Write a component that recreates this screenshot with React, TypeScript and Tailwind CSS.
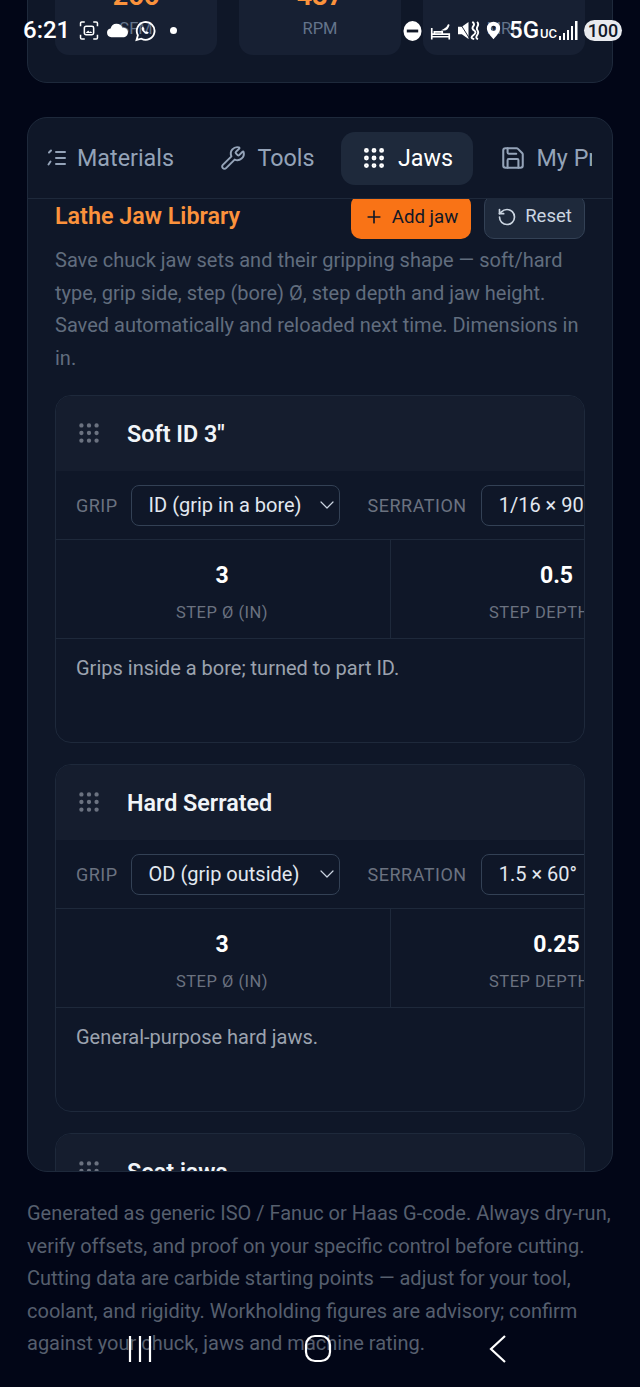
import React from 'react';
import { ChevronDown, Grip, Plus, RotateCcw, Save, Wrench } from 'lucide-react';

const jaws = [
  { name: 'Soft ID 3"', grip: 'ID (grip in a bore)', serration: '1/16 × 90°', dia: '3', depth: '0.5', note: 'Grips inside a bore; turned to part ID.' },
  { name: 'Hard Serrated', grip: 'OD (grip outside)', serration: '1.5 × 60°', dia: '3', depth: '0.25', note: 'General-purpose hard jaws.' },
];

function StatusBar() {
  return (
    <div className="absolute top-0 left-0 w-full h-[60px] text-white">
      <span className="absolute left-[23px] top-[17px] text-[24px] leading-[26px] font-medium">6:21</span>
      <svg className="absolute left-[78px] top-[20px]" width="22" height="21" viewBox="0 0 26 24" fill="none" stroke="white" strokeWidth="1.8">
        <path d="M3 7V3.500Q3 2 4.500 2H8M18 2h3.500Q23 2 23 3.500V7M3 17v3.500Q3 22 4.500 22H8M18 22h3.500q1.500 0 1.500-1.500V17" />
        <rect x="7.500" y="7" width="11" height="10" rx="2" />
        <path d="M9 15l3-3 2 2 1-1 2 2z" fill="white" stroke="none" />
      </svg>
      <svg className="absolute left-[106px] top-[23px]" width="23" height="15" viewBox="0 0 26 16" fill="white">
        <path d="M6 15.500a5 5 0 0 1-.8-9.900A7 7 0 0 1 18.500 5a5.300 5.300 0 0 1 2 10.500z" />
      </svg>
      <svg className="absolute left-[134px] top-[20px]" width="22" height="23" viewBox="0 0 26 26" fill="none" stroke="white" strokeWidth="2.200">
        <path d="M3 23l1.600-5.600A10.500 10.500 0 1 1 8.700 21.500z" />
        <path d="M9.500 8c-1 1.200-.6 3.400 1.600 5.700 2.300 2.300 4.500 2.800 5.600 1.700l.8-1.100-2.500-1.600-1 .8c-1-.5-2-1.500-2.500-2.500l.8-1-1.500-2.500z" fill="white" stroke="none" />
      </svg>
      <div className="absolute left-[170px] top-[27px] w-[7px] h-[7px] rounded-full bg-white" />
      <svg className="absolute left-[403px] top-[21px]" width="19" height="20" viewBox="0 0 20 21">
        <ellipse cx="10" cy="10.500" rx="9.500" ry="10.500" fill="white" />
        <rect x="4" y="9" width="12" height="3" fill="#111827" />
      </svg>
      <svg className="absolute left-[430px] top-[22px]" width="21" height="19" viewBox="0 0 24 20" fill="none" stroke="white" strokeWidth="1.900">
        <path d="M2 6v13M2 13h20v6M2 16h20M5 13v-2.500h9V13" />
        <path d="M16 8q4 0 5.500-6-1 3.500-5.500 6z" fill="white" />
      </svg>
      <svg className="absolute left-[457px] top-[20px]" width="23" height="21" viewBox="0 0 24 22" fill="white">
        <path d="M1 7h4l7-5v18l-7-5H1z" />
        <path d="M1.500 1l12 19" stroke="#1a2233" strokeWidth="1" />
        <path d="M16 2q3 2 1 4.500t1 4.500-1 5 1 4M21 2q2 2 .5 4.500t0 4.500-.5 5 1 4" fill="none" stroke="white" strokeWidth="2" />
      </svg>
      <svg className="absolute left-[486px] top-[20px]" width="15" height="21" viewBox="0 0 17 21" fill="white">
        <path fillRule="evenodd" d="M8.500 0.500a7.500 7.500 0 0 1 7.500 7.500c0 4.500-4.500 9-7.500 12.500C5.500 17 1 12.500 1 8a7.500 7.500 0 0 1 7.500-7.500zm0 4.500a3 3 0 1 0 0 6 3 3 0 0 0 0-6z" />
      </svg>
      <span className="absolute left-[509px] top-[16px] text-[24px] leading-[28px] font-medium">5G</span>
      <span className="absolute left-[540px] top-[27px] text-[13px] leading-[14px] font-medium">UC</span>
      <svg className="absolute left-[557px] top-[20px]" width="22" height="21" viewBox="0 0 22 21" fill="white">
        <rect x="2" y="16" width="2" height="4" /><rect x="6" y="13" width="2" height="7" /><rect x="10" y="10" width="2" height="10" /><rect x="14" y="6" width="2" height="14" /><rect x="18" y="1" width="2.500" height="19" />
      </svg>
      <div className="absolute left-[584px] top-[20px] w-[38px] h-[21px] rounded-full bg-[#e8eaee] text-[#111827] text-[18px] leading-[21px] text-center font-medium">100</div>
    </div>
  );
}

function NavBar() {
  return (
    <div className="absolute left-0 top-[1330px] w-full h-[40px]">
      <svg className="absolute left-[126px] top-[5px]" width="28" height="28" viewBox="0 0 28 28" stroke="white" strokeWidth="2.200">
        <path d="M4 1v26M14 1v26M24 1v26" />
      </svg>
      <svg className="absolute left-[304px] top-[4px]" width="28" height="29" viewBox="0 0 28 29" fill="none" stroke="white" strokeWidth="2.200">
        <rect x="2" y="2" width="24" height="25" rx="9" />
      </svg>
      <svg className="absolute left-[488px] top-[4px]" width="22" height="30" viewBox="0 0 22 30" fill="none" stroke="white" strokeWidth="2.200">
        <path d="M17 2L3 15l14 13" />
      </svg>
    </div>
  );
}

function MaterialsIcon() {
  return (
    <svg width="19" height="20" viewBox="0 0 19 20" fill="none" stroke="currentColor" strokeWidth="2" strokeLinecap="round">
      <path d="M9 4h9M9 10h9M9 16h9" />
      <path d="M2 4.500L4 2.500M1.500 16.500L3.500 13.500" />
    </svg>
  );
}

function Tab({ icon, label, active }: { icon: React.ReactNode; label: string; active?: boolean }) {
  return (
    <div className={`flex shrink-0 items-center gap-[11px] h-[53px] px-[20px] rounded-[14px] text-[23.300px] ${active ? 'bg-[#1e293b] text-white' : 'text-[#94a3b8]'}`}>
      {icon}
      <span>{label}</span>
    </div>
  );
}

function JawCard({ jaw }: { jaw: (typeof jaws)[number] }) {
  return (
    <div className="h-[348px] shrink-0 overflow-hidden rounded-[16px] border border-[#1e293b] bg-[#0f1728]">
      <div className="flex h-[75px] items-center gap-[25px] bg-[#151d2e] px-[21px] pt-[2px]">
        <Grip size={26} className="-mt-[4px] -ml-px text-[#6b7280]" />
        <span className="text-[23.300px] font-semibold text-[#f1f5f9]">{jaw.name}</span>
      </div>
      <div className="flex h-[69px] w-[700px] items-center border-b border-[#1e293b] pl-[20px]">
        <span className="text-[18px] tracking-[0.5px] text-[#6b7280]">GRIP</span>
        <div className="ml-[13px] flex h-[41px] w-[209px] items-center justify-between rounded-[8px] border border-[#334155] pl-[17px] text-[20px] text-[#e2e8f0]">
          {jaw.grip}
          <ChevronDown size={24} strokeWidth={1.200} className="text-[#cbd5e1]" />
        </div>
        <span className="ml-[28px] text-[18px] tracking-[0.5px] text-[#6b7280]">SERRATION</span>
        <div className="ml-[14px] flex h-[41px] w-[180px] items-center rounded-[8px] border border-[#334155] pl-[17px] text-[20px] text-[#e2e8f0]">
          {jaw.serration}
        </div>
      </div>
      <div className="flex h-[99px] w-[700px] border-b border-[#1e293b]">
        <div className="flex w-[335px] flex-col items-center border-r border-[#1e293b] pt-[22px] pr-[2px]">
          <span className="text-[23px] leading-[28px] font-bold text-white">{jaw.dia}</span>
          <span className="mt-[12px] text-[16.500px] leading-[22px] tracking-[0.5px] text-[#6b7280]">STEP Ø (IN)</span>
        </div>
        <div className="flex w-[331px] flex-col items-center pt-[22px]">
          <span className="text-[23px] leading-[28px] font-bold text-white">{jaw.depth}</span>
          <span className="mt-[12px] text-[16.500px] leading-[22px] tracking-[0.5px] text-[#6b7280]">STEP DEPTH (IN)</span>
        </div>
      </div>
      <p className="px-[20px] pt-[16px] text-[20px] leading-[26px] text-[#9ca3af]">{jaw.note}</p>
    </div>
  );
}

export default function App() {
  return (
    <div className="relative h-[1387px] w-[640px] overflow-hidden bg-[#020617] font-['Roboto',sans-serif]">
      {/* scrolled page */}
      <div className="mx-[27px] -mt-[40px] h-[123px] overflow-hidden rounded-[20px] border border-[#1e293b] bg-[#0f1728] px-[27px]">
        <div className="-mt-px grid grid-cols-3 gap-[22px]">
          {['SFM', 'RPM', 'MRR'].map((label, i) => (
            <div key={label} className="flex h-[95px] flex-col items-center justify-end rounded-[14px] bg-[#172033] pb-[15px]">
              <span className="h-[32px] text-[27px] leading-[32px] font-bold text-[#fb923c]">{['266', '437', ''][i]}</span>
              <span className="mt-[6px] text-[16.500px] leading-[22px] text-[#64748b]">{label}</span>
            </div>
          ))}
        </div>
      </div>

      <div className="mx-[27px] mt-[34px] h-[1055px] overflow-hidden rounded-[20px] border border-[#1e293b] bg-[#0f1728]">
        <div className="h-[81px] border-b border-[#1e293b] pr-[20px]">
          <div className="-ml-px flex h-full items-center gap-[6.500px] overflow-hidden">
            <Tab icon={<MaterialsIcon />} label="Materials" />
            <Tab icon={<Wrench size={26} strokeWidth={1.800} />} label="Tools" />
            <Tab icon={<Grip size={26} strokeWidth={2.500} />} label="Jaws" active />
            <Tab icon={<Save size={26} strokeWidth={1.900} />} label="My Presets" />
          </div>
        </div>
        <div className="h-[973px] overflow-hidden px-[27px]">
          <div className="-mt-[4px] flex items-center justify-between">
            <span className="-mt-[2px] text-[23.300px] font-semibold text-[#fb923c]">Lathe Jaw Library</span>
            <div className="flex gap-[13px]">
              <div className="flex h-[44px] w-[120px] items-center justify-center gap-[8px] rounded-[10px] bg-[#f97316] text-[18.700px] text-[#111827]">
                <Plus size={20} />
                Add jaw
              </div>
              <div className="flex h-[44px] w-[101px] items-center justify-center gap-[8px] rounded-[10px] border border-[#334155] bg-[#1e293b] text-[18.500px] text-[#cbd5e1]">
                <RotateCcw size={20} />
                Reset
              </div>
            </div>
          </div>
          <p className="mt-[5px] text-[20px] leading-[32.500px] text-[#616d7e]">
            Save chuck jaw sets and their gripping shape — soft/hard type, grip side, step (bore) Ø, step depth and jaw height. Saved automatically and reloaded next time. Dimensions in in.
          </p>
          <div className="mt-[21px] flex flex-col gap-[21px]">
            {jaws.map((jaw) => (
              <JawCard key={jaw.name} jaw={jaw} />
            ))}
            <JawCard jaw={{ name: 'Seat jaws', grip: 'OD (grip outside)', serration: 'Smooth', dia: '3', depth: '0.25', note: '' }} />
          </div>
        </div>
      </div>

      <p className="mx-[27px] mt-[25px] text-[20px] leading-[32.500px] text-[#565f6e]">
        Generated as generic ISO / Fanuc or Haas G-code. Always dry-run, verify offsets, and proof on your specific control before cutting. Cutting data are carbide starting points — adjust for your tool, coolant, and rigidity. Workholding figures are advisory; confirm against your chuck, jaws and machine rating.
      </p>

      <StatusBar />
      <NavBar />
    </div>
  );
}
